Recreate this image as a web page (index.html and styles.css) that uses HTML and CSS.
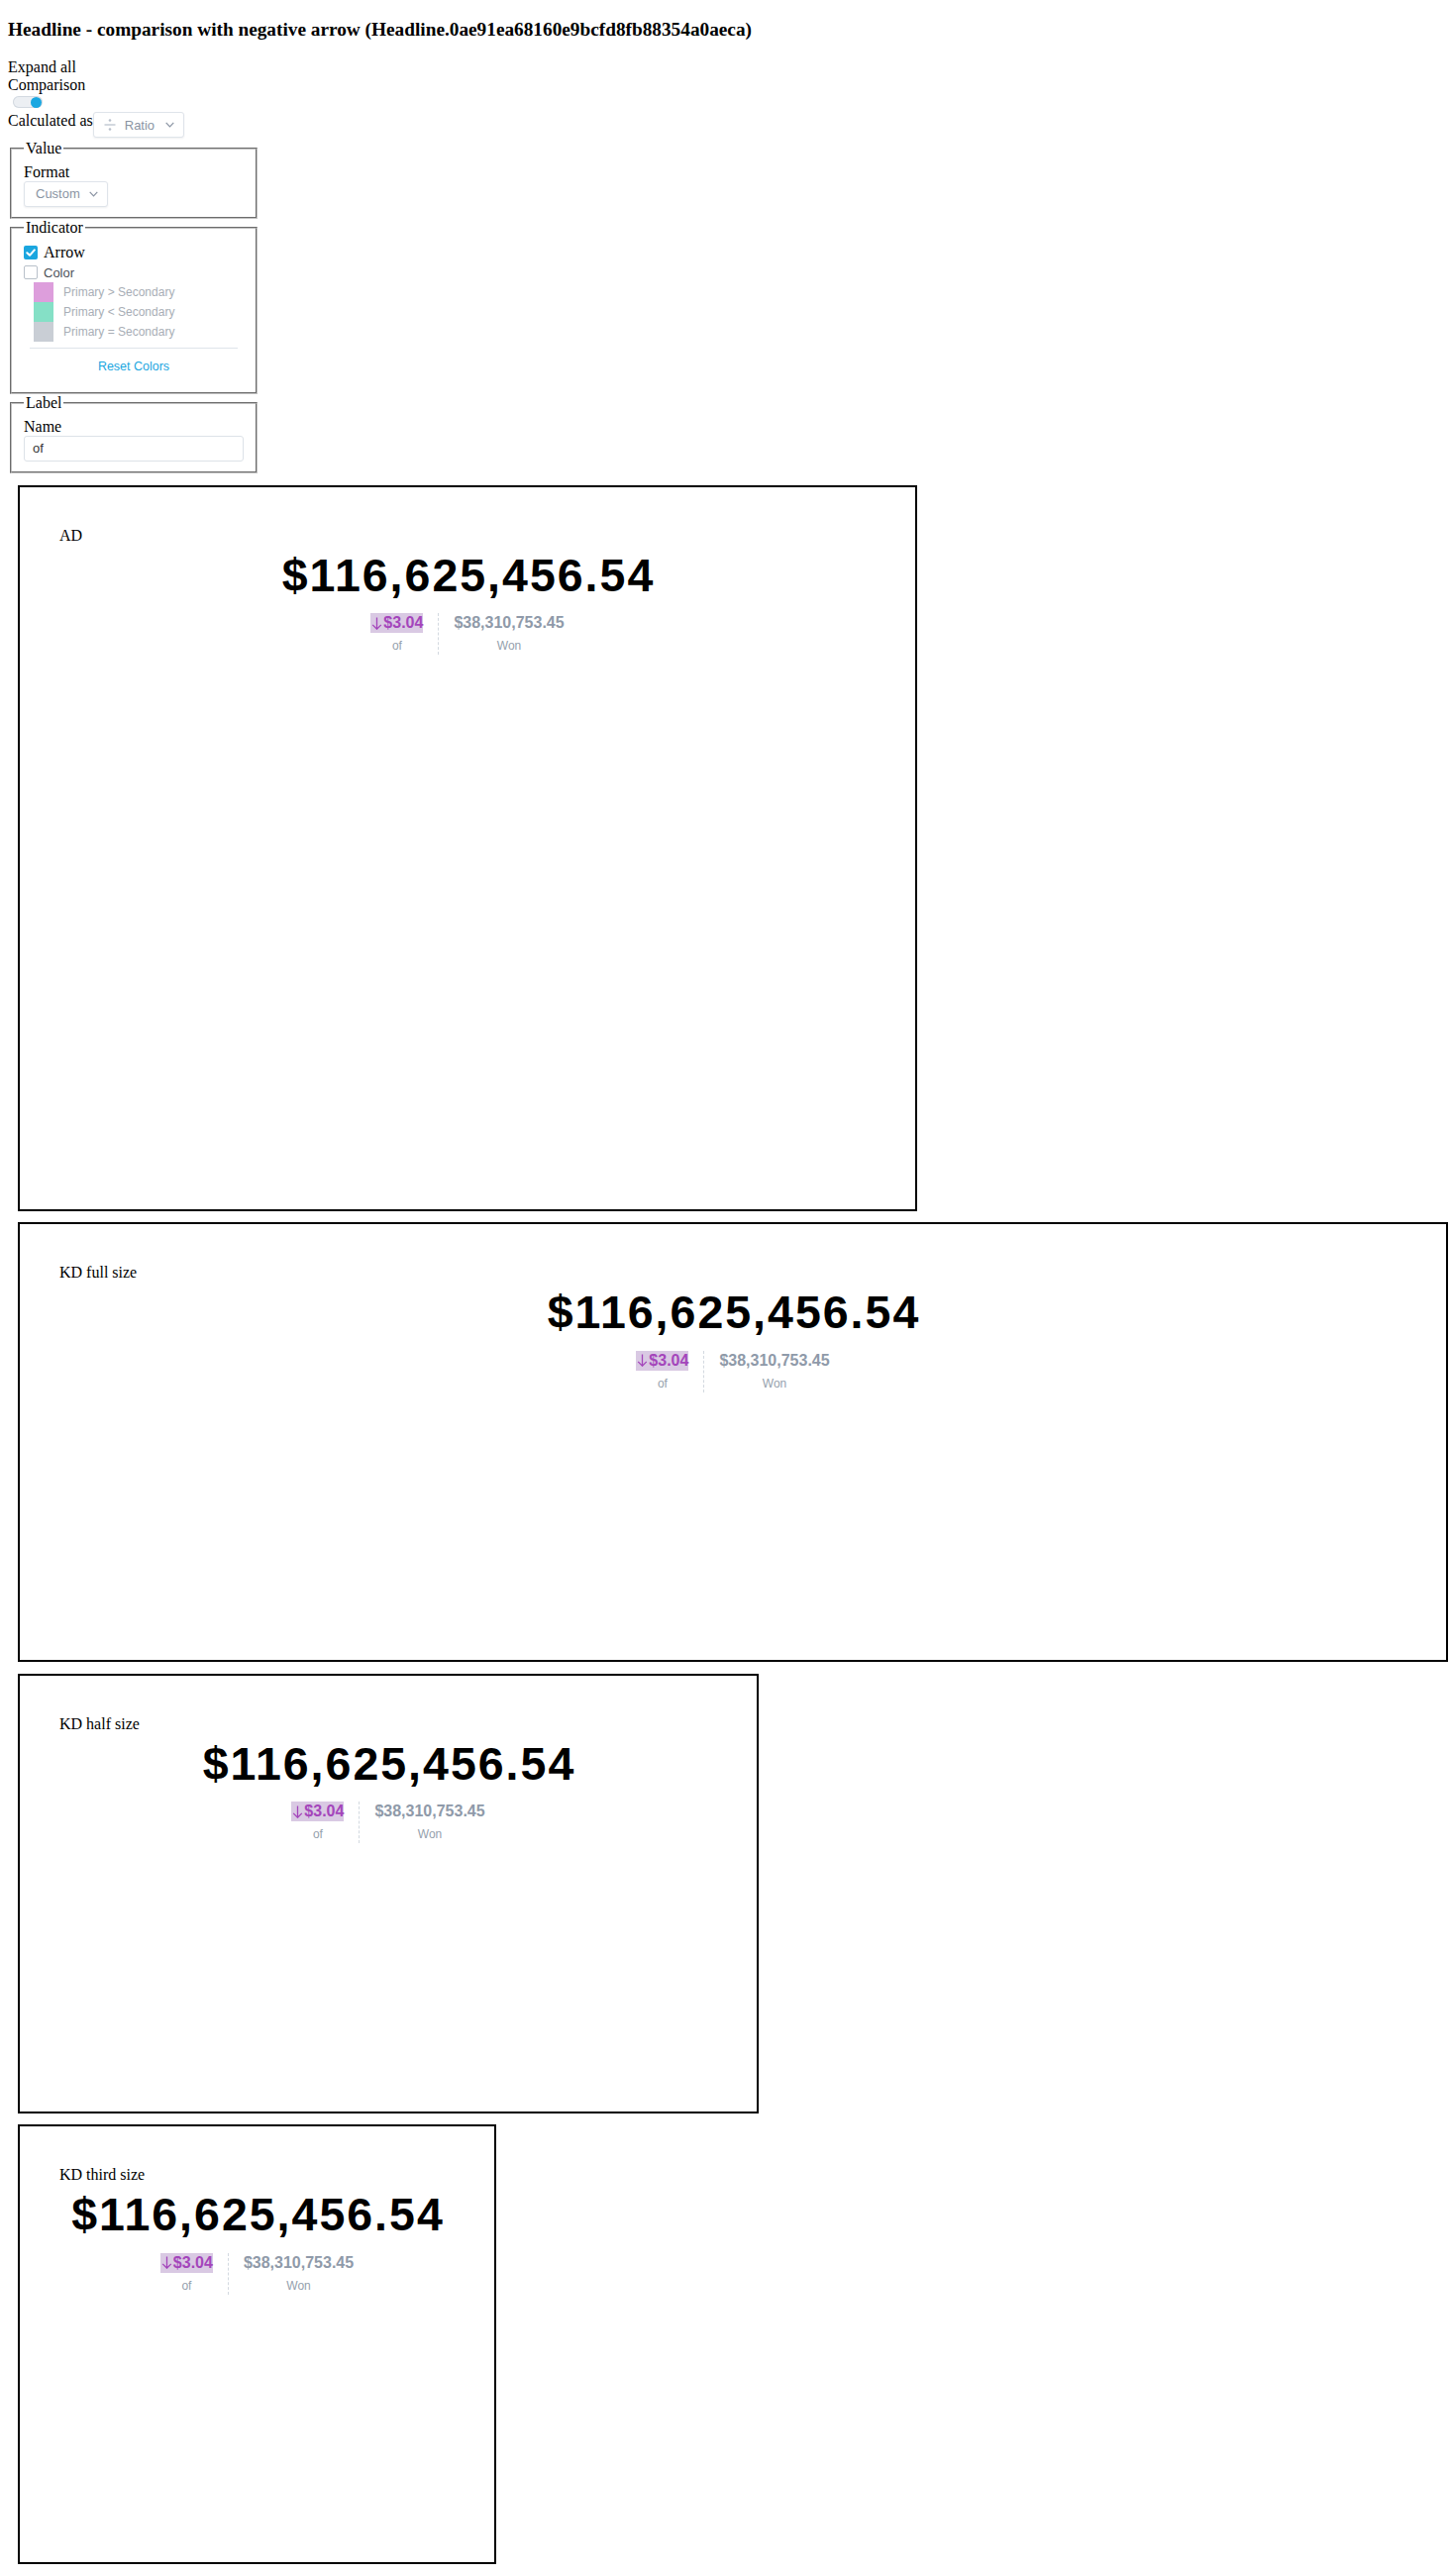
FILE: index.html
```html
<!DOCTYPE html>
<html>
<head>
<meta charset="utf-8">
<title>Headline</title>
<link rel="stylesheet" href="styles.css">
</head>
<body>
<h3 class="title">Headline - comparison with negative arrow (Headline.0ae91ea68160e9bcfd8fb88354a0aeca)</h3>
<div class="settings">
  <div class="line">Expand all</div>
  <div class="line">Comparison</div>
  <div class="toggle-row"><span class="toggle"><span class="knob"></span></span></div>
  <div class="calc-row">
    <span class="calc-text">Calculated as</span>
    <div class="select select-ratio">
      <svg class="divide-icon" width="12" height="14" viewBox="0 0 12 14"><circle cx="6" cy="2.5" r="1.3" fill="#b7bfca"/><rect x="0.5" y="6.4" width="11" height="1.2" fill="#b7bfca"/><circle cx="6" cy="11.5" r="1.3" fill="#b7bfca"/></svg>
      <span class="select-text">Ratio</span>
      <svg class="chev" width="9" height="6" viewBox="0 0 9 6"><polyline points="0.7,0.8 4.5,4.8 8.3,0.8" fill="none" stroke="#8a94a3" stroke-width="1.2"/></svg>
    </div>
  </div>
  <fieldset>
    <legend>Value</legend>
    <div class="line">Format</div>
    <div class="select select-custom">
      <span class="select-text">Custom</span>
      <svg class="chev" width="9" height="6" viewBox="0 0 9 6"><polyline points="0.7,0.8 4.5,4.8 8.3,0.8" fill="none" stroke="#8a94a3" stroke-width="1.2"/></svg>
    </div>
  </fieldset>
  <fieldset>
    <legend>Indicator</legend>
    <div class="check-row check-row-first">
      <span class="cb cb-on"><svg width="14" height="14" viewBox="0 0 14 14"><polyline points="3.3,7.2 6,9.8 10.8,4.4" fill="none" stroke="#fff" stroke-width="2" stroke-linecap="round" stroke-linejoin="round"/></svg></span>
      <span class="arrow-text">Arrow</span>
    </div>
    <div class="check-row">
      <span class="cb cb-off"></span>
      <span class="color-text">Color</span>
    </div>
    <div class="swatch-row"><span class="swatch sw-pink"></span><span class="swatch-label">Primary &gt; Secondary</span></div>
    <div class="swatch-row"><span class="swatch sw-teal"></span><span class="swatch-label">Primary &lt; Secondary</span></div>
    <div class="swatch-row"><span class="swatch sw-gray"></span><span class="swatch-label">Primary = Secondary</span></div>
    <div class="divider"></div>
    <div class="reset">Reset Colors</div>
  </fieldset>
  <fieldset>
    <legend>Label</legend>
    <div class="line">Name</div>
    <div class="text-input">of</div>
  </fieldset>
</div>

<div class="cards">
  <div class="card card-ad">
    <div class="card-label">AD</div>
    <div class="big">$116,625,456.54</div>
    <div class="comp">
      <div class="comp-col comp-first">
        <div class="comp-value neg"><svg class="arrow" width="11" height="13" viewBox="0 0 11 13"><path d="M5.5 0.5V12.2M1.2 7.9L5.5 12.2L9.8 7.9" fill="none" stroke="#a445bb" stroke-width="1.3"/></svg>$3.04</div>
        <div class="comp-label">of</div>
      </div>
      <div class="comp-col">
        <div class="comp-value sec">$38,310,753.45</div>
        <div class="comp-label">Won</div>
      </div>
    </div>
  </div>
  <div class="card card-full">
    <div class="card-label">KD full size</div>
    <div class="big">$116,625,456.54</div>
    <div class="comp">
      <div class="comp-col comp-first">
        <div class="comp-value neg"><svg class="arrow" width="11" height="13" viewBox="0 0 11 13"><path d="M5.5 0.5V12.2M1.2 7.9L5.5 12.2L9.8 7.9" fill="none" stroke="#a445bb" stroke-width="1.3"/></svg>$3.04</div>
        <div class="comp-label">of</div>
      </div>
      <div class="comp-col">
        <div class="comp-value sec">$38,310,753.45</div>
        <div class="comp-label">Won</div>
      </div>
    </div>
  </div>
  <div class="card card-half">
    <div class="card-label">KD half size</div>
    <div class="big">$116,625,456.54</div>
    <div class="comp">
      <div class="comp-col comp-first">
        <div class="comp-value neg"><svg class="arrow" width="11" height="13" viewBox="0 0 11 13"><path d="M5.5 0.5V12.2M1.2 7.9L5.5 12.2L9.8 7.9" fill="none" stroke="#a445bb" stroke-width="1.3"/></svg>$3.04</div>
        <div class="comp-label">of</div>
      </div>
      <div class="comp-col">
        <div class="comp-value sec">$38,310,753.45</div>
        <div class="comp-label">Won</div>
      </div>
    </div>
  </div>
  <div class="card card-third">
    <div class="card-label">KD third size</div>
    <div class="big">$116,625,456.54</div>
    <div class="comp">
      <div class="comp-col comp-first">
        <div class="comp-value neg"><svg class="arrow" width="11" height="13" viewBox="0 0 11 13"><path d="M5.5 0.5V12.2M1.2 7.9L5.5 12.2L9.8 7.9" fill="none" stroke="#a445bb" stroke-width="1.3"/></svg>$3.04</div>
        <div class="comp-label">of</div>
      </div>
      <div class="comp-col">
        <div class="comp-value sec">$38,310,753.45</div>
        <div class="comp-label">Won</div>
      </div>
    </div>
  </div>
</div>
</body>
</html>
```
FILE: styles.css
```css
body {
  margin: 0;
  padding: 19px 8px 0;
  font-family: "Liberation Serif", "Times New Roman", serif;
  font-size: 16px;
  color: #000;
  background: #fff;
}

.title {
  font-size: 19.3px;
  font-weight: bold;
  line-height: 22px;
  margin: 0 0 18px;
}

.settings {
  width: 254px;
}

.line {
  line-height: 18px;
}

.toggle-row {
  height: 18px;
  padding-top: 2px;
  box-sizing: border-box;
}

.toggle {
  display: flex;
  align-items: center;
  justify-content: flex-end;
  margin-left: 5px;
  width: 30px;
  height: 12px;
  padding-right: 1px;
  box-sizing: border-box;
  border-radius: 6px;
  background: #eceff3;
  box-shadow: inset 0 0 0 1px #d3d9e0;
}

.knob {
  display: block;
  width: 11px;
  height: 11px;
  border-radius: 50%;
  background: #19a7e1;
}

.calc-row {
  display: flex;
  align-items: flex-start;
  height: 28px;
}

.calc-text {
  line-height: 18px;
}

.select {
  display: flex;
  align-items: center;
  height: 26px;
  box-sizing: border-box;
  border: 1px solid #dfe4ea;
  border-radius: 3px;
  box-shadow: 0 1px 2px rgba(30, 40, 60, 0.07);
  background: #fff;
  font-family: "Liberation Sans", Arial, sans-serif;
  font-size: 13px;
  color: #8a94a3;
}

.select-ratio {
  width: 92px;
  padding: 0 9px 0 10px;
}

.select-ratio .select-text {
  margin-left: 9px;
}

.select-custom {
  width: 85px;
  padding: 0 9px 0 11px;
}

.chev {
  margin-left: auto;
}

.divide-icon {
  display: block;
}

fieldset {
  margin: 0 2px;
  padding: 0.35em 0.75em 0.625em;
  border: 2px groove #c0c0c0;
}

legend {
  padding: 0 2px;
  line-height: 18px;
}

.check-row {
  display: flex;
  align-items: center;
  height: 20px;
  gap: 6px;
}

.check-row-first {
  height: 21px;
  padding-top: 1.5px;
  box-sizing: border-box;
}

.cb {
  display: block;
  width: 14px;
  height: 14px;
  box-sizing: border-box;
  border-radius: 2px;
}

.cb svg {
  display: block;
}

.cb-on {
  background: #1ba6df;
}

.cb-off {
  border: 1px solid #b9c1ca;
  background: #fff;
}

.arrow-text {
  font-size: 16px;
}

.color-text {
  font-family: "Liberation Sans", Arial, sans-serif;
  font-size: 13px;
  color: #4b5058;
}

.swatch-row {
  display: flex;
  align-items: center;
  height: 20px;
  padding-left: 10px;
}

.swatch {
  display: block;
  width: 20px;
  height: 20px;
}

.sw-pink { background: #dd9edc; }
.sw-teal { background: #85e0c6; }
.sw-gray { background: #c9ced5; }

.swatch-label {
  margin-left: 10px;
  font-family: "Liberation Sans", Arial, sans-serif;
  font-size: 12px;
  color: #a8aeb6;
}

.divider {
  height: 1px;
  background: #dfe4ea;
  margin: 6px 6px 0;
}

.reset {
  text-align: center;
  font-family: "Liberation Sans", Arial, sans-serif;
  font-size: 12.5px;
  line-height: 16px;
  color: #1ca6df;
  padding: 10px 0 8px;
}

.text-input {
  display: flex;
  align-items: center;
  height: 26px;
  box-sizing: border-box;
  border: 1px solid #dde2e8;
  border-radius: 3px;
  padding-left: 8px;
  font-family: "Liberation Sans", Arial, sans-serif;
  font-size: 13px;
  color: #333;
}

.cards {
  display: flex;
  flex-direction: column;
  align-items: flex-start;
  gap: 11.5px;
  margin-top: 12px;
  padding-left: 10px;
}

.card {
  flex: none;
  box-sizing: border-box;
  border: 2px solid #000;
  padding: 40px;
  height: 444px;
}

.card-ad { width: 908px; height: 733px; }
.card-full { width: 1444px; }
.card-half { width: 748px; }
.card-third { width: 483px; }

.card-label {
  line-height: 18px;
}

.big {
  font-family: "Liberation Sans", Arial, sans-serif;
  font-weight: bold;
  font-size: 46.5px;
  letter-spacing: 2px;
  padding-left: 2px;
  line-height: 54px;
  text-align: center;
  margin-top: 4px;
  white-space: nowrap;
}

.comp {
  display: flex;
  justify-content: center;
  margin-top: 11.5px;
}

.comp-col {
  display: flex;
  flex-direction: column;
  align-items: center;
  padding: 0 15px;
}

.comp-first {
  border-right: 1px dashed #d3d9e0;
}

.comp-value {
  font-family: "Liberation Sans", Arial, sans-serif;
  font-weight: bold;
  font-size: 16px;
  line-height: 20px;
  white-space: nowrap;
}

.neg {
  background: #d9c9e3;
  color: #a445bb;
  padding-left: 1px;
}

.arrow {
  vertical-align: -1.5px;
  margin-right: 1px;
}

.sec {
  color: #8f9aa9;
}

.comp-label {
  font-family: "Liberation Sans", Arial, sans-serif;
  font-size: 12px;
  line-height: 18px;
  color: #959fad;
  margin-top: 4px;
}
```
